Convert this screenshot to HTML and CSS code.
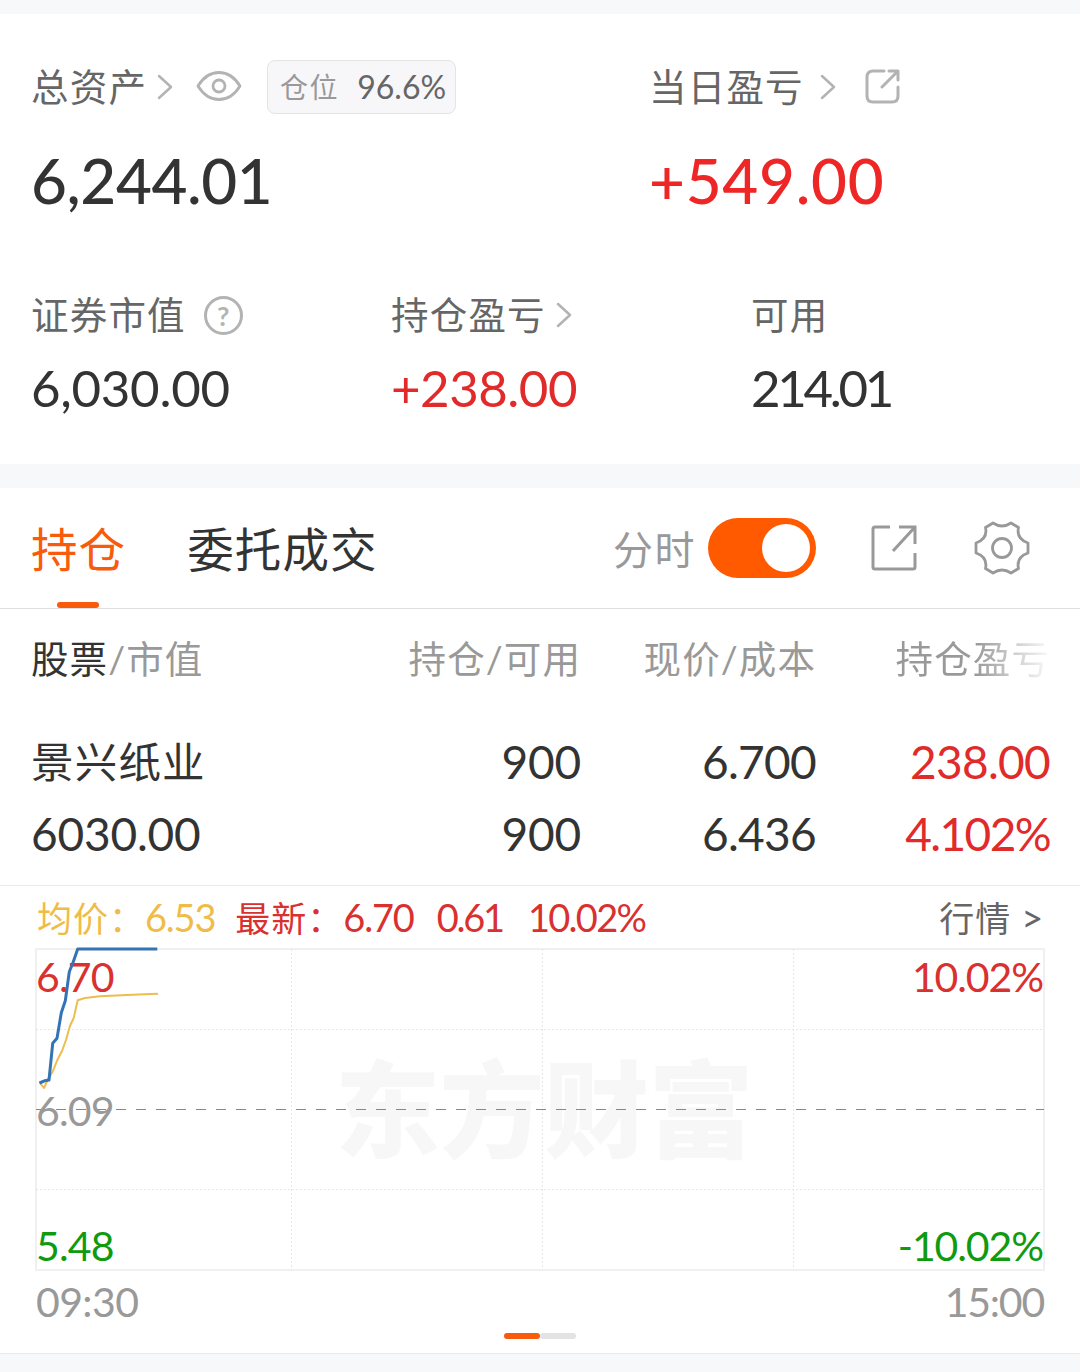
FILE: index.html
```
<!DOCTYPE html>
<html lang="zh-CN">
<head>
    <meta charset="UTF-8">
    <meta name="viewport" content="width=device-width, initial-scale=1.0">
    <title>持仓</title>
    <link rel="stylesheet" href="styles.css">
</head>
<body>
    <section class="summary">
        <div class="summary-top">
            <div class="total">
                <div class="label-row">
                    <span class="label">总资产</span>
                    <svg class="arrow" width="18" height="26" viewBox="0 0 18 26"><path d="M3 2L15 13L3 24"/></svg>
                    <svg class="eye" width="46" height="32" viewBox="0 0 46 32">
                        <path d="M2 16C13-2 33-2 44 16C33 34 13 34 2 16Z"/>
                        <circle cx="23" cy="16" r="6"/>
                    </svg>
                    <div class="position-tag"><span>仓位</span><b>96.6%</b></div>
                </div>
                <div class="big-num">6,244.01</div>
            </div>
            <div class="today">
                <div class="label-row">
                    <span class="label">当日盈亏</span>
                    <svg class="arrow today-arrow" width="18" height="26" viewBox="0 0 18 26"><path d="M3 2L15 13L3 24"/></svg>
                    <svg class="share-small" width="36" height="36" viewBox="0 0 36 36">
                        <path d="M19 2H8Q2 2 2 8V27Q2 33 8 33H27Q33 33 33 27V18M24 2H33V11M33 2L17 18"/>
                    </svg>
                </div>
                <div class="big-num today-num">+549.00</div>
            </div>
        </div>
        <div class="summary-bottom">
            <div>
                <div class="label-row">
                    <span class="label">证券市值</span>
                    <span class="help">?</span>
                </div>
                <div class="mid-num">6,030.00</div>
            </div>
            <div>
                <div class="label-row">
                    <span class="label">持仓盈亏</span>
                    <svg class="arrow" width="18" height="26" viewBox="0 0 18 26"><path d="M3 2L15 13L3 24"/></svg>
                </div>
                <div class="mid-num profit-num">+238.00</div>
            </div>
            <div>
                <div class="label-row"><span class="label">可用</span></div>
                <div class="mid-num avail-num">214.01</div>
            </div>
        </div>
    </section>

    <section class="holdings">
        <nav class="tabs">
            <div class="tab active">持仓</div>
            <div class="tab">委托成交</div>
            <div class="tools">
                <span class="tools-label">分时</span>
                <div class="switch"><i></i></div>
                <svg class="share" width="48" height="48" viewBox="0 0 48 48">
                    <path d="M20 3H5Q3 3 3 5V43Q3 45 5 45H43Q45 45 45 43V29M29 3H45V20M45 3L23 27"/>
                </svg>
                <svg class="gear" width="58" height="58" viewBox="-29 -29 58 58">
                    <path d="M-26-5Q-14-9-16.500-20.500L-9-25Q0-19 9-25L16.500-20.500Q14-9 26-5V5Q14 9 16.500 20.500L9 25Q0 19-9 25L-16.500 20.500Q-14 9-26 5Z"/>
                    <circle r="9.500"/>
                </svg>
            </div>
        </nav>

        <div class="row head">
            <div><em>股票</em>/市值</div>
            <div>持仓/可用</div>
            <div>现价/成本</div>
            <div class="fade">持仓盈亏</div>
        </div>
        <div class="stock">
            <div class="row">
                <div class="name">景兴纸业</div>
                <div>900</div>
                <div class="price">6.700</div>
                <div class="price red">238.00</div>
            </div>
            <div class="row">
                <div>6030.00</div>
                <div>900</div>
                <div class="price">6.436</div>
                <div class="red pct">4.102%</div>
            </div>
        </div>

        <div class="quote">
            <span class="avg">均价：<b>6.53</b></span>
            <span class="last">最新：<b>6.70</b><b>0.61</b><b>10.02%</b></span>
            <span class="more">行情 <b>&gt;</b></span>
        </div>
        <svg class="chart" width="1080" height="335" viewBox="0 0 1080 335">
            <text class="watermark" x="335" y="209">东方财富</text>
            <rect class="frame" x="36" y="9" width="1008" height="321"/>
            <path class="grid" d="M36 89.500H1044M36 249.500H1044M291.500 9V330M542.500 9V330M793.500 9V330"/>
            <path class="zero" d="M36 169.500H1044"/>
            <text class="red" x="36" y="52">6.70</text>
            <text class="gray" x="36" y="186">6.09</text>
            <text class="green" x="36" y="321">5.48</text>
            <text class="red end" x="1043" y="52">10.02%</text>
            <text class="green end" x="1043" y="321">-10.02%</text>
            <polyline class="avg-line" points="40,143 44,148 48,139 52.700,131.700 57.300,120 62,111 66,100 70,85.700 73.700,78 77.700,60.300 85,58 100,56.300 126.700,55 157.300,53.700"/>
            <polyline class="price-line" points="39.500,143 45,140.700 49,140 52.700,103.300 57,98.300 61.300,72.700 65.300,60.700 69.300,31.700 73.300,21.700 77.700,9 157.300,9"/>
        </svg>
        <div class="times"><span>09:30</span><span class="close">15:00</span></div>
        <div class="pager"><i class="on"></i><i></i></div>
    </section>
</body>
</html>
```
FILE: styles.css
```
* {
    box-sizing: border-box;
}

body {
    margin: 0;
    padding-top: 14px;
    height: 1372px;
    overflow: hidden;
    background-color: #f7f8fa;
    color: #333;
    font-family: Lato, "Noto Sans CJK SC", sans-serif;
    font-weight: 400;
}

b, i, em {
    font-weight: inherit;
    font-style: normal;
}

svg {
    display: block;
    flex: none;
    fill: none;
    stroke-linecap: round;
    stroke-linejoin: round;
}

.summary {
    height: 450px;
    padding: 46px 0 0 31px;
    background-color: #fff;
}

.summary-top {
    display: grid;
    grid-template-columns: 618px 1fr;
    height: 228px;
}

.summary-bottom {
    display: grid;
    grid-template-columns: 360px 360px 1fr;
}

.label-row {
    display: flex;
    align-items: center;
    height: 54px;
    white-space: nowrap;
}

.label {
    color: #666;
    font-size: 37.500px;
    letter-spacing: 1.200px;
    line-height: 54px;
}

.arrow {
    margin-left: 9px;
    stroke: #b3b3b3;
    stroke-width: 2.500;
}

.today-arrow {
    margin-left: 15px;
}

.eye {
    margin: 0 25px 3px 22px;
    stroke: #b3b3b3;
    stroke-width: 2.800;
}

.position-tag {
    display: flex;
    justify-content: space-between;
    width: 189px;
    height: 54px;
    padding: 0 9px 0 12px;
    border: 1px solid #e4e4e6;
    border-radius: 8px;
    background-color: #f7f7fa;
    color: #999;
    font-size: 28px;
    letter-spacing: 1.500px;
    line-height: 52px;
}

.position-tag b {
    color: #666;
    font-size: 32px;
    letter-spacing: 0;
}

.share-small {
    margin-left: 28px;
    stroke: #b3b3b3;
    stroke-width: 3;
}

.big-num {
    height: 80px;
    margin-top: 26px;
    font-size: 62px;
    font-weight: 500;
    letter-spacing: -0.400px;
    line-height: 80px;
}

.today-num {
    color: #ee2626;
    letter-spacing: 0.700px;
}

.help {
    width: 39px;
    height: 39px;
    margin-left: 18px;
    border: 3px solid #b3b3b3;
    border-radius: 50%;
    color: #b3b3b3;
    font-size: 27px;
    font-weight: 700;
    line-height: 33px;
    text-align: center;
}

.mid-num {
    height: 60px;
    margin-top: 16px;
    font-size: 51px;
    letter-spacing: -0.300px;
    line-height: 60px;
}

.profit-num {
    letter-spacing: -0.500px;
}

.avail-num {
    letter-spacing: -3.300px;
}

.profit-num,
.red {
    color: #e12b2b;
}

.holdings {
    height: 866px;
    margin-top: 24px;
    border-bottom: 1px solid #e8eaec;
    background-color: #fff;
}

.tabs {
    display: flex;
    height: 121px;
    padding-left: 31px;
    border-bottom: 1px solid #dedede;
}

.tab {
    display: flex;
    flex-direction: column;
    align-items: center;
    margin-right: 61px;
    font-size: 46.500px;
    letter-spacing: 1.100px;
    line-height: 122px;
    height: 120px;
}

.tab.active {
    color: #f75b0b;
}

.tab.active::after {
    content: "";
    width: 42px;
    height: 6px;
    margin: -8px 2px 0 0;
    border-radius: 3px;
    background-color: #f75b0b;
}

.tools {
    display: flex;
    align-items: center;
    height: 120px;
    margin-left: auto;
    padding-right: 49px;
}

.tools-label {
    margin: 0 12px 0 0;
    color: #999;
    font-size: 40px;
    letter-spacing: 1.500px;
}

.switch {
    width: 108px;
    height: 60px;
    padding: 6px;
    border-radius: 30px;
    background-color: #ff5a00;
}

.switch i {
    display: block;
    width: 48px;
    height: 48px;
    margin-left: auto;
    border-radius: 50%;
    background-color: #fff;
}

.share {
    margin-left: 54px;
    stroke: #999;
    stroke-width: 3;
    stroke-linecap: butt;
    stroke-linejoin: miter;
}

.gear {
    margin-left: 55px;
    stroke: #999;
    stroke-width: 2.800;
}

.row {
    display: grid;
    grid-template-columns: 300px 250px 235px 234px;
    height: 72px;
    padding-left: 31px;
    font-size: 46px;
    letter-spacing: -0.200px;
    line-height: 71px;
    text-align: right;
    white-space: nowrap;
}

.row > :first-child {
    text-align: left;
}

.head {
    height: 117px;
    color: #999;
    font-size: 37.500px;
    letter-spacing: 1.100px;
    line-height: 100px;
}

.head em {
    color: #333;
}

.fade {
    justify-self: end;
    color: transparent;
    background-image: linear-gradient(90deg, #999 52%, #ccc 76%, #fafafa 100%);
    background-clip: text;
    -webkit-background-clip: text;
}

.stock {
    height: 160px;
    border-bottom: 1px solid #ececec;
}

.row .name {
    font-size: 42.500px;
    letter-spacing: 1.200px;
}

.price {
    letter-spacing: -0.700px;
}

.pct {
    letter-spacing: -1.600px;
}

.quote {
    display: flex;
    height: 54px;
    padding: 0 38px 0 37px;
    font-size: 35px;
    letter-spacing: 1px;
    line-height: 63px;
    white-space: nowrap;
}

.quote b {
    font-size: 38px;
    letter-spacing: -1.200px;
}

.avg {
    color: #f0bc48;
}

.last {
    margin-left: 20px;
    color: #d93030;
}

.last b + b {
    margin-left: 23px;
}

.last b:nth-child(2) {
    letter-spacing: -2.200px;
}

.last b:last-child {
    margin-left: 25px;
    letter-spacing: -1.700px;
}

.more {
    margin-left: auto;
    color: #666;
}

.chart text {
    font-size: 41px;
    letter-spacing: -0.800px;
    stroke: none;
}

.chart .watermark {
    fill: #f7f7f7;
    font-size: 105px;
    font-weight: 900;
    letter-spacing: -0.500px;
}

.chart .red {
    fill: #d93030;
}

.chart .gray {
    fill: #999;
}

.chart .green {
    fill: #0f9a0f;
}

.chart .end {
    letter-spacing: -1.100px;
    text-anchor: end;
}

.frame {
    stroke: #f0f0f0;
    stroke-width: 2;
}

.grid {
    stroke: #e6e6e6;
    stroke-dasharray: 2 2;
    stroke-linecap: butt;
}

.zero {
    stroke: #888;
    stroke-dasharray: 10 10;
    stroke-linecap: butt;
}

.avg-line {
    stroke: #edbd4e;
    stroke-width: 2;
}

.price-line {
    stroke: #3473b4;
    stroke-width: 3;
    stroke-linecap: butt;
}

.times {
    display: flex;
    justify-content: space-between;
    height: 58px;
    padding: 0 36px;
    color: #999;
    font-size: 41px;
    letter-spacing: -0.600px;
    line-height: 54px;
}

.close {
    letter-spacing: -1.200px;
}

.pager {
    display: flex;
    justify-content: center;
}

.pager i {
    width: 36px;
    height: 6px;
    border-radius: 3px;
    background-color: #e3e3e3;
}

.pager .on {
    background-color: #f75b0b;
}
```
